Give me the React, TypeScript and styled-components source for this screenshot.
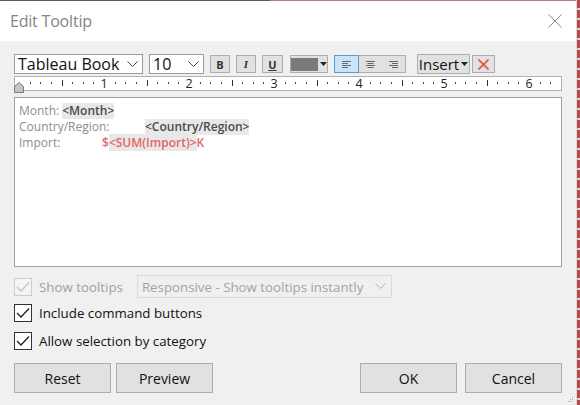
import React from 'react';
import styled, { createGlobalStyle } from 'styled-components';

const Global = createGlobalStyle`
  html, body { margin: 0; padding: 0; width: 580px; height: 405px; overflow: hidden; background: #f0f0f0; }
  body { font-family: "Open Sans", "Noto Sans", sans-serif; color: #000; }
  #root { width: 580px; height: 405px; }
`;

const Screen = styled.div`
  display: flex;
  width: 580px;
  height: 405px;
`;

const Dialog = styled.div`
  width: 576px;
  height: 405px;
  display: flex;
  flex-direction: column;
  background: #f0f0f0;
  position: relative;
`;

const RedEdge = styled.div`
  width: 4px;
  height: 405px;
  border-left: 1px solid #d6d6d6;
  background: repeating-linear-gradient(to bottom, #b5474d 0 8px, #e9c9cb 8px 10px);
`;

const TopLine = styled.div`
  height: 1px;
  background: linear-gradient(to right, #5c5c5c 0 270px, #b87a7c 270px);
`;

const TitleBar = styled.div`
  height: 40px;
  background: #fff;
  display: flex;
  align-items: center;
  justify-content: space-between;
  padding: 0 14px 0 10px;
`;

const Title = styled.div`
  font-size: 16px;
  color: #858585;
  font-family: "Open Sans", sans-serif;
  letter-spacing: -0.2px;
`;

const Body = styled.div`
  display: flex;
  flex-direction: column;
  padding: 13px 14px 0 14px;
`;

const Toolbar = styled.div`
  display: flex;
  align-items: center;
  height: 20px;
`;

const Select = styled.div<{ $w: number; $ml?: number }>`
  width: ${p => p.$w}px;
  height: 20px;
  margin-left: ${p => p.$ml ?? 0}px;
  box-sizing: border-box;
  border: 1px solid #9c9c9c;
  background: #fff;
  display: flex;
  align-items: center;
  justify-content: space-between;
  padding: 0 4px 0 3px;
  font-size: 16px;
  color: #111;
  line-height: 1;
`;

const ToolBtn = styled.div<{ $w: number; $ml: number }>`
  width: ${p => p.$w}px;
  height: 18px;
  margin-left: ${p => p.$ml}px;
  box-sizing: border-box;
  border: 1px solid #adadad;
  background: #e1e1e1;
  display: flex;
  align-items: center;
  justify-content: center;
  font-size: 11px;
  color: #333;
`;

const BoldGlyph = styled.b`
  font-family: "Open Sans", sans-serif;
`;

const ItalicGlyph = styled.i`
  font-family: "Liberation Serif", serif;
  font-weight: 700;
`;

const UnderGlyph = styled.u`
  font-weight: 700;
`;

const CaretSlot = styled.span`
  margin-left: 2px;
  display: flex;
`;

const AlignGroup = styled.div`
  display: flex;
  margin-left: 6px;
  border: 1px solid #adadad;
  background: #e1e1e1;
  height: 18px;
  box-sizing: border-box;
`;

const AlignBtn = styled.div<{ $active?: boolean }>`
  box-sizing: border-box;
  margin: ${p => (p.$active ? '-1px 0 -1px -1px' : '0')};
  height: ${p => (p.$active ? '18px' : '16px')};
  width: ${p => (p.$active ? '25px' : '23px')};
  border: ${p => (p.$active ? '1px solid #5b9bd5' : 'none')};
  background: ${p => (p.$active ? '#cce4f7' : 'transparent')};
  display: flex;
  align-items: center;
  justify-content: center;
`;

const Swatch = styled.div`
  width: 27px;
  height: 13px;
  background: #7a7a7a;
`;

const InsertBtn = styled.div`
  margin-left: 11px;
  width: 53px;
  height: 20px;
  box-sizing: border-box;
  border: 1px solid #adadad;
  background: #e1e1e1;
  display: flex;
  align-items: center;
  justify-content: center;
  gap: 2px;
  font-size: 15px;
  color: #111;
`;

const RulerWrap = styled.div`
  position: relative;
  margin-top: 2px;
  height: 15px;
  box-sizing: border-box;
  border: 1px solid #b0b0b0;
  background: #fff;
`;

const RulerSvg = styled.svg`
  display: block;
  overflow: visible;
`;

const IndentMarker = styled.svg`
  position: absolute;
  left: -1px;
  top: 5px;
`;

const Editor = styled.div`
  margin-top: 6px;
  height: 170px;
  box-sizing: border-box;
  border: 1px solid #a0a0a0;
  background: #fff;
  padding: 5px 4px;
  font-size: 12px;
  font-family: "Open Sans", sans-serif;
`;

const Line = styled.div`
  display: flex;
  height: 16px;
  line-height: 16px;
  white-space: pre;
`;

const Label = styled.span<{ $w?: number }>`
  color: #8e8e8e;
  ${p => (p.$w ? `width: ${p.$w}px;` : 'margin-right: 3px;')}
`;

const Field = styled.span`
  background: #e8e8e8;
  color: #4b4b4b;
  font-weight: 600;
`;

const Red = styled.span`
  color: #e5646d;
  font-weight: 600;
`;

const RedField = styled.span`
  background: #e8e8e8;
`;

const OptionRow = styled.div<{ $mt: number }>`
  display: flex;
  align-items: center;
  margin-top: ${p => p.$mt}px;
  font-size: 13.3px;
  line-height: 18px;
`;

const Box = styled.div<{ $disabled?: boolean }>`
  width: 18px;
  height: 18px;
  box-sizing: border-box;
  border: 1px solid ${p => (p.$disabled ? '#cccccc' : '#333')};
  background: ${p => (p.$disabled ? '#f4f4f4' : '#fff')};
  display: flex;
  align-items: center;
  justify-content: center;
`;

const OptionText = styled.span<{ $disabled?: boolean }>`
  margin-left: 7px;
  color: ${p => (p.$disabled ? '#9f9f9f' : '#111')};
`;

const ModeSelect = styled.div`
  margin-left: 14px;
  width: 255px;
  height: 23px;
  box-sizing: border-box;
  border: 1px solid #d9d9d9;
  display: flex;
  align-items: center;
  justify-content: space-between;
  padding: 0 5px 0 4px;
  color: #a3a3a3;
`;

const ButtonRow = styled.div`
  display: flex;
  margin-top: 13px;
`;

const Spacer = styled.div`
  flex: 1;
`;

const DlgButton = styled.div<{ $ml?: number }>`
  width: 97px;
  height: 30px;
  margin-left: ${p => p.$ml ?? 0}px;
  box-sizing: border-box;
  border: 1px solid #adadad;
  background: #e1e1e1;
  display: flex;
  align-items: center;
  justify-content: center;
  font-size: 14px;
  color: #111;
`;

const Grip = styled.svg`
  position: absolute;
  right: 2px;
  bottom: 1px;
`;

const Chevron = ({ color = '#444' }: { color?: string }) => (
  <svg width="11" height="7" viewBox="0 0 11 7">
    <polyline points="0.5,0.5 5.5,5.5 10.5,0.5" fill="none" stroke={color} strokeWidth="1" />
  </svg>
);

const Caret = () => (
  <svg width="7" height="4" viewBox="0 0 7 4">
    <polygon points="0,0 7,0 3.5,4" fill="#222" />
  </svg>
);

const AlignIcon = ({ kind, color }: { kind: 'l' | 'c' | 'r'; color: string }) => {
  const rows = [0, 2, 4, 6];
  const widths = [9, 6, 9, 6];
  return (
    <svg width="9" height="7" viewBox="0 0 9 7">
      {rows.map((y, i) => {
        const w = widths[i];
        const x = kind === 'l' ? 0 : kind === 'r' ? 9 - w : (9 - w) / 2;
        return <rect key={y} x={x} y={y} width={w} height="1" fill={color} />;
      })}
    </svg>
  );
};

const Check = ({ color }: { color: string }) => (
  <svg width="14" height="12" viewBox="0 0 14 12">
    <polyline points="1,6 5,10 13,1.5" fill="none" stroke={color} strokeWidth="1.3" />
  </svg>
);

const Ruler = () => {
  const ticks: React.ReactNode[] = [];
  const inch = 85;
  const x0 = 4;
  for (let i = 0; i < 7; i++) {
    const base = x0 + inch * i;
    for (let j = 1; j < 8; j++) {
      const x = Math.round(base + (j * inch) / 8);
      if (x > 544) continue;
      if (j === 4) {
        ticks.push(<rect key={`t${i}-${j}`} x={x} y={3} width={1} height={6} fill="#333" />);
      } else {
        ticks.push(<rect key={`t${i}-${j}`} x={x} y={5} width={1} height={2} fill="#444" />);
      }
    }
    if (i < 6) {
      ticks.push(
        <text key={`n${i}`} x={base + inch} y={10.5} fontSize="12.5" textAnchor="middle" fill="#222" fontFamily="Open Sans, sans-serif">
          {i + 1}
        </text>
      );
    }
  }
  return (
    <RulerSvg width="546" height="13" viewBox="0 0 546 13">
      {ticks}
    </RulerSvg>
  );
};

export default function App() {
  return (
    <>
      <Global />
      <Screen>
        <Dialog>
          <TopLine />
          <TitleBar>
            <Title>Edit Tooltip</Title>
            <svg width="14" height="14" viewBox="0 0 14 14">
              <line x1="0.5" y1="0.5" x2="13.5" y2="13.5" stroke="#8a8a8a" strokeWidth="1" />
              <line x1="13.5" y1="0.5" x2="0.5" y2="13.5" stroke="#8a8a8a" strokeWidth="1" />
            </svg>
          </TitleBar>
          <Body>
            <Toolbar>
              <Select $w={129}>
                <span>Tableau Book</span>
                <Chevron />
              </Select>
              <Select $w={55} $ml={6}>
                <span>10</span>
                <Chevron />
              </Select>
              <ToolBtn $w={20} $ml={6}><BoldGlyph>B</BoldGlyph></ToolBtn>
              <ToolBtn $w={20} $ml={6}><ItalicGlyph>I</ItalicGlyph></ToolBtn>
              <ToolBtn $w={21} $ml={6}><UnderGlyph>U</UnderGlyph></ToolBtn>
              <ToolBtn $w={38} $ml={7}>
                <Swatch />
                <CaretSlot><Caret /></CaretSlot>
              </ToolBtn>
              <AlignGroup>
                <AlignBtn $active><AlignIcon kind="l" color="#5a7088" /></AlignBtn>
                <AlignBtn><AlignIcon kind="c" color="#666" /></AlignBtn>
                <AlignBtn><AlignIcon kind="r" color="#666" /></AlignBtn>
              </AlignGroup>
              <InsertBtn>
                <span>Insert</span>
                <Caret />
              </InsertBtn>
              <ToolBtn $w={23} $ml={2}>
                <svg width="11" height="11" viewBox="0 0 11 11">
                  <line x1="0.5" y1="0.5" x2="10.5" y2="10.5" stroke="#e0553a" strokeWidth="1.6" />
                  <line x1="10.5" y1="0.5" x2="0.5" y2="10.5" stroke="#e0553a" strokeWidth="1.6" />
                </svg>
              </ToolBtn>
            </Toolbar>
            <RulerWrap>
              <Ruler />
              <IndentMarker width="10" height="11" viewBox="0 0 10 11">
                <polygon points="5,0.5 9.5,4.5 9.5,10.5 0.5,10.5 0.5,4.5" fill="#c4c4c4" stroke="#7a7a7a" strokeWidth="1" />
              </IndentMarker>
            </RulerWrap>
            <Editor>
              <Line>
                <Label>Month:</Label>
                <Field>&lt;Month&gt;</Field>
              </Line>
              <Line>
                <Label $w={126}>Country/Region:</Label>
                <Field>&lt;Country/Region&gt;</Field>
              </Line>
              <Line>
                <Label $w={83}>Import:</Label>
                <Red>$<RedField>&lt;SUM(Import)&gt;</RedField>K</Red>
              </Line>
            </Editor>
            <OptionRow $mt={8}>
              <Box $disabled><Check color="#c4c4c4" /></Box>
              <OptionText $disabled>Show tooltips</OptionText>
              <ModeSelect>
                <span>Responsive - Show tooltips instantly</span>
                <Chevron color="#b0b0b0" />
              </ModeSelect>
            </OptionRow>
            <OptionRow $mt={6}>
              <Box><Check color="#222" /></Box>
              <OptionText>Include command buttons</OptionText>
            </OptionRow>
            <OptionRow $mt={10}>
              <Box><Check color="#222" /></Box>
              <OptionText>Allow selection by category</OptionText>
            </OptionRow>
            <ButtonRow>
              <DlgButton>Reset</DlgButton>
              <DlgButton $ml={5}>Preview</DlgButton>
              <Spacer />
              <DlgButton>OK</DlgButton>
              <DlgButton $ml={8}>Cancel</DlgButton>
            </ButtonRow>
          </Body>
          <Grip width="7" height="7" viewBox="0 0 7 7">
            <rect x="5" y="0" width="1" height="1" fill="#aaa" />
            <rect x="3" y="2" width="1" height="1" fill="#aaa" />
            <rect x="5" y="2" width="1" height="1" fill="#aaa" />
            <rect x="1" y="4" width="1" height="1" fill="#aaa" />
            <rect x="3" y="4" width="1" height="1" fill="#aaa" />
            <rect x="5" y="4" width="1" height="1" fill="#aaa" />
          </Grip>
        </Dialog>
        <RedEdge />
      </Screen>
    </>
  );
}
